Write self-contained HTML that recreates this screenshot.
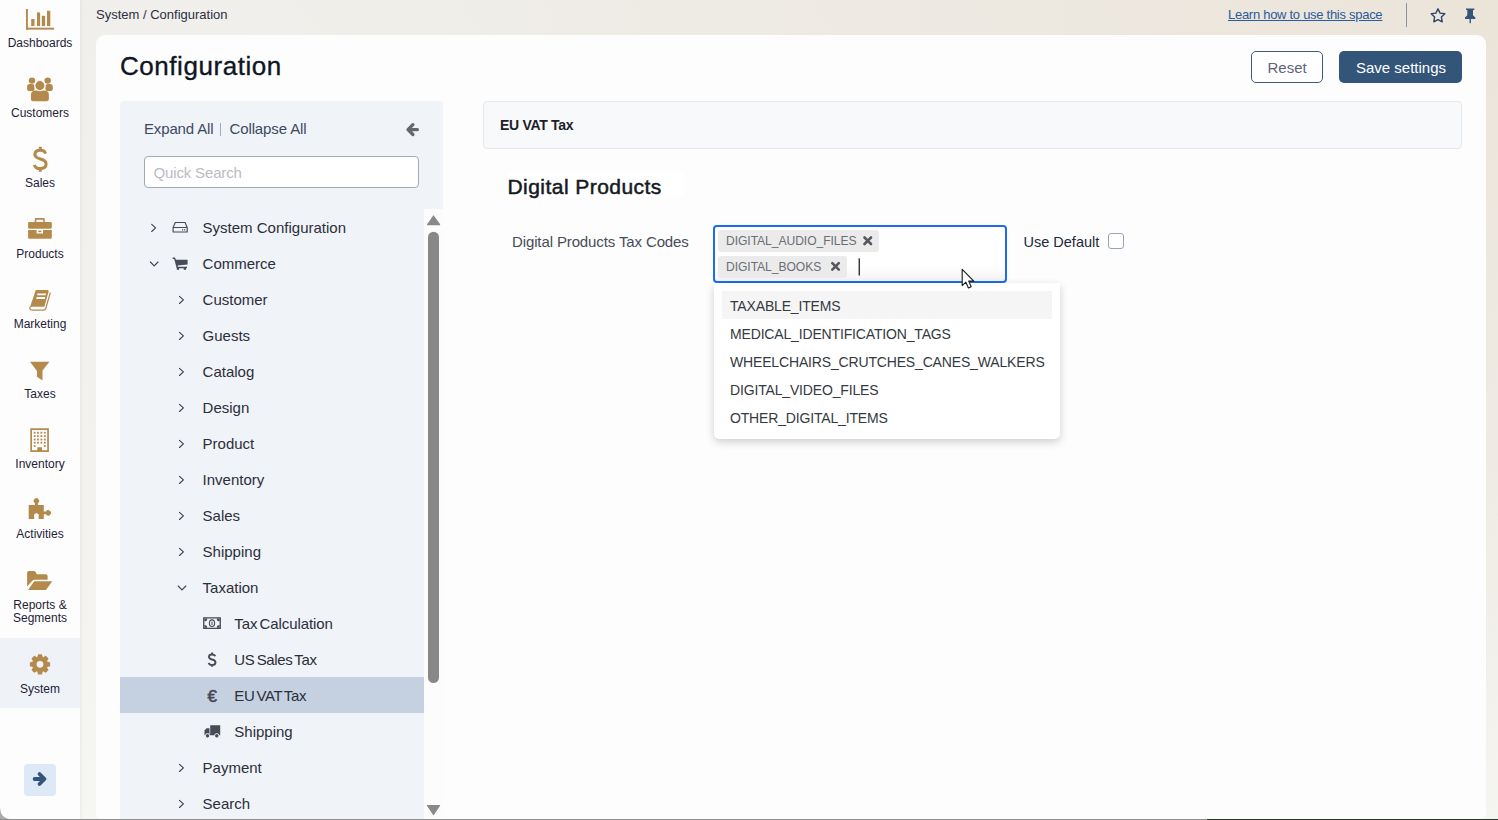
<!DOCTYPE html>
<html><head><meta charset="utf-8">
<style>
*{margin:0;padding:0;box-sizing:border-box}
html,body{width:1498px;height:820px;overflow:hidden}
body{font-family:"Liberation Sans",sans-serif;background:#fdfdfd;position:relative;color:#2a2e38}
.abs{position:absolute}
.t{position:absolute;white-space:nowrap;line-height:1}
#bg{left:80px;top:0;width:1418px;height:820px;background:radial-gradient(ellipse 1250px 850px at 100% 0%,#ebe4d9 0%,rgba(236,230,221,.75) 40%,rgba(238,236,231,0) 100%),linear-gradient(180deg,#f0efeb 0%,#f3f2ee 60%,#f6f6f2 100%)}
#side{left:0;top:0;width:80px;height:820px;background:#fdfdfd;box-shadow:1px 0 3px rgba(0,0,0,.06)}
.nav .lbl{position:absolute;left:0;width:80px;text-align:center;font-size:12px;color:#1d2238;line-height:13px}
.nav svg{position:absolute}
#card{left:96px;top:35px;width:1390px;height:784px;background:#fdfdfd;border-radius:9px 9px 5px 5px}
#tree{left:120px;top:101px;width:323px;height:720px;background:#f0f3f8;border-radius:4px 4px 0 0}
.ti{position:absolute;font-size:15px;color:#2b2f3a;white-space:nowrap;line-height:1}
.chev{position:absolute}
</style></head><body>
<div id="bg" class="abs"></div>
<div id="side" class="abs nav">
<div class="abs" style="left:0;top:638px;width:80px;height:70px;background:#eff3f8"></div>
<svg class="abs" style="left:0;top:0" width="80" height="820" viewBox="0 0 80 820">
<g fill="#b38a4c">
<!-- dashboards -->
<rect x="26" y="9" width="1.9" height="20.6"/>
<rect x="26" y="27.7" width="28" height="1.9"/>
<rect x="31.2" y="19" width="3.3" height="7.1"/>
<rect x="37" y="12.4" width="3.1" height="13.7"/>
<rect x="41.8" y="15.8" width="3.3" height="10.3"/>
<rect x="47" y="10.8" width="3.3" height="15.3"/>
<!-- customers -->
<circle cx="32" cy="80.6" r="3.2"/>
<circle cx="47.7" cy="80.6" r="3.2"/>
<rect x="27.1" y="84" width="7.4" height="7" rx="2.6"/>
<rect x="45.4" y="84" width="7.4" height="7" rx="2.6"/>
<path d="M30.9,99V95Q30.9,90.4 35.5,90.4H44.3Q48.9,90.4 48.9,95V99Q48.9,101.2 46.7,101.2H33.1Q30.9,101.2 30.9,99Z"/>
<circle cx="39.9" cy="85.6" r="5.1" stroke="#fdfdfd" stroke-width="1.1"/>
<!-- products briefcase -->
<path d="M34.7,222V219.2Q34.7,218.1 35.8,218.1H43.7Q44.8,218.1 44.8,219.2V222H43.2V219.8H36.3V222Z"/>
<rect x="28.1" y="222" width="23.7" height="6.7" rx="1.3"/>
<path d="M28.1,230H36.6V233.5H43V230H51.8V237.4Q51.8,238.7 50.5,238.7H29.4Q28.1,238.7 28.1,237.4Z"/>
<rect x="38.3" y="230.6" width="3" height="1.6"/>
<!-- marketing book -->
<path d="M35.8,290.1H47.6Q48.9,290.1 48.6,291.4L44.4,306.8H30.1Z M37.5,293.5L37.1,295.2H45.7L46.1,293.5Z M36.7,296.9L36.2,299H44.8L45.3,296.9Z" fill-rule="evenodd"/>
<path d="M31.3,306.8Q29.9,307.6 30.6,308.7Q31.4,309.6 32.6,309.6H43.2Q44.8,309.6 45.2,308.2L49.8,292.2L50.9,292.7L46.2,309.3Q45.6,310.7 43.8,310.7H32.1Q29.6,310.7 29.1,308.6Q28.8,306.5 31.2,305.9Z"/>
<!-- taxes filter -->
<path d="M30,361.7H49.4L42.5,370.5V380.6L37,376.7V370.9Z"/>
<!-- inventory building -->
<path d="M30.3,428.2H48.9V451.9H30.3Z M32,430V450.2H37.3V447.2H42V450.2H47.2V430Z" fill-rule="evenodd"/>
</g>
<g fill="#b38a4c">
<rect x="33.8" y="431.8" width="1.8" height="1.8"/><rect x="37.0" y="431.8" width="1.8" height="1.8"/><rect x="40.5" y="431.8" width="1.8" height="1.8"/><rect x="43.9" y="431.8" width="1.8" height="1.8"/><rect x="33.8" y="435.2" width="1.8" height="1.8"/><rect x="37.0" y="435.2" width="1.8" height="1.8"/><rect x="40.5" y="435.2" width="1.8" height="1.8"/><rect x="43.9" y="435.2" width="1.8" height="1.8"/><rect x="33.8" y="438.6" width="1.8" height="1.8"/><rect x="37.0" y="438.6" width="1.8" height="1.8"/><rect x="40.5" y="438.6" width="1.8" height="1.8"/><rect x="43.9" y="438.6" width="1.8" height="1.8"/><rect x="33.8" y="441.8" width="1.8" height="1.8"/><rect x="37.0" y="441.8" width="1.8" height="1.8"/><rect x="40.5" y="441.8" width="1.8" height="1.8"/><rect x="43.9" y="441.8" width="1.8" height="1.8"/><rect x="33.8" y="445.2" width="1.8" height="1.8"/><rect x="43.9" y="445.2" width="1.8" height="1.8"/>
</g>
<g fill="#b38a4c">
<!-- activities puzzle -->
<path d="M28.7,505.1H34.9V503.2A2.7,2.7 0 1 1 37.9,503.2V505.1H43.8V511.4H45.9A2.7,2.7 0 1 1 45.9,514.3H43.8V518.9H38.6V516.6A2.4,2.4 0 1 0 34.2,516.6V518.9H28.7Z"/>
<!-- reports folder -->
<path d="M27.1,586.5V572.8Q27.1,571 28.9,571H33.9Q35.3,571 36,572.6L36.6,574.3H45.8Q47.6,574.3 47.6,576.1V579.7H34.6Q33,579.7 32.1,581Z"/>
<path d="M34.2,581.2H52.3L45.9,589.9H28.1Z"/>
<!-- system gear -->
<path fill-rule="evenodd" d="M37.23,657.22L38.10,654.18L41.90,654.18L42.77,657.22L43.05,657.34L45.81,655.80L48.50,658.49L46.96,661.25L47.08,661.53L50.12,662.40L50.12,666.20L47.08,667.07L46.96,667.35L48.50,670.11L45.81,672.80L43.05,671.26L42.77,671.38L41.90,674.42L38.10,674.42L37.23,671.38L36.95,671.26L34.19,672.80L31.50,670.11L33.04,667.35L32.92,667.07L29.88,666.20L29.88,662.40L32.92,661.53L33.04,661.25L31.50,658.49L34.19,655.80L36.95,657.34Z M43.4,664.3A3.4,3.4 0 1 0 36.6,664.3A3.4,3.4 0 1 0 43.4,664.3Z"/>
</g>
</svg>
<div class="lbl" style="top:37.4px">Dashboards</div>
<div class="lbl" style="top:107.2px">Customers</div>
<div class="lbl" style="top:177.2px">Sales</div>
<div class="lbl" style="top:248.4px">Products</div>
<div class="lbl" style="top:318.2px">Marketing</div>
<div class="lbl" style="top:388.4px">Taxes</div>
<div class="lbl" style="top:458.0px">Inventory</div>
<div class="lbl" style="top:528.4px">Activities</div>
<div class="lbl" style="top:599.1px">Reports &amp;</div>
<div class="lbl" style="top:612.4px">Segments</div>
<div class="lbl" style="top:683.0px">System</div>
<svg class="abs" style="left:0;top:0" width="80" height="200"><path d="M45.6,153.6C45,151.4 43.2,150.3 40.2,150.3C36.6,150.3 34.9,152.2 34.9,154.5C34.9,157 37,158 40.5,159C44.5,160 46.1,161.5 46.1,164.1C46.1,166.8 43.9,168.6 40.2,168.6C37.1,168.6 35,167.2 34.4,164.8M40.3,146.8V150.5M40.3,168.5V171.7" fill="none" stroke="#b38a4c" stroke-width="3"/></svg>
<div class="abs" style="left:24px;top:764px;width:32px;height:32px;background:#dde9f7;border-radius:4px"></div>
<svg class="abs" style="left:0;top:0" width="80" height="820"><path d="M34.6,779H43.5M39.5,774L44.5,779L39.5,784" fill="none" stroke="#34557a" stroke-width="3.8" stroke-linecap="round" stroke-linejoin="round"/></svg>
</div>
<div class="t" style="left:96px;top:8.2px;font-size:13px;color:#2c2e42">System / Configuration</div>
<div class="t" style="left:1228px;top:8px;font-size:13px;letter-spacing:-.28px;color:#2a5b9c;text-decoration:underline">Learn how to use this space</div>
<div class="abs" style="left:1406px;top:3px;width:1px;height:24px;background:#8a919c"></div>
<svg class="abs" style="left:1420px;top:0" width="78" height="34" viewBox="1420 0 78 34">
<path d="M1438,8.8L1440.1,13.1L1444.8,13.8L1441.4,17.1L1442.2,21.8L1438,19.6L1433.8,21.8L1434.6,17.1L1431.2,13.8L1435.9,13.1Z" fill="none" stroke="#2d4566" stroke-width="1.4" stroke-linejoin="round"/>
<path d="M1466,8.5H1474.3V10H1473V15.2L1475.3,17.5V19H1470.9V22.7L1470.2,23.5L1469.5,22.7V19H1465V17.5L1467.3,15.2V10H1466Z" fill="#34557a"/>
</svg>
<div id="card" class="abs"></div>
<div class="t" style="left:120px;top:52.7px;font-size:26px;letter-spacing:.55px;color:#0f1522;-webkit-text-stroke:.35px #0f1522">Configuration</div>
<div class="abs" style="left:1251px;top:51px;width:72px;height:32px;border:1px solid #3d5b80;border-radius:5px;background:#fff"></div>
<div class="t" style="left:1267.5px;top:59.5px;font-size:15px;color:#5c6577">Reset</div>
<div class="abs" style="left:1339px;top:51px;width:123px;height:32px;background:#34557a;border-radius:5px"></div>
<div class="t" style="left:1356px;top:59.5px;font-size:15px;color:#fff">Save settings</div>
<div id="tree" class="abs"></div>
<div class="t" style="left:144px;top:121.3px;font-size:15px;letter-spacing:-.15px;color:#3b4a63">Expand All</div>
<div class="abs" style="left:220px;top:123px;width:1px;height:13px;background:#a3abb8"></div>
<div class="t" style="left:229.5px;top:121.3px;font-size:15px;letter-spacing:-.12px;color:#3b4a63">Collapse All</div>
<svg class="abs" style="left:398px;top:115px" width="30" height="30" viewBox="398 115 30 30"><path d="M417.4,129.6H410M412.9,124.7L408,129.6L412.9,134.5" fill="none" stroke="#65676c" stroke-width="3.3" stroke-linecap="round" stroke-linejoin="round"/></svg>
<div class="abs" style="left:144px;top:156px;width:275px;height:32px;background:#fff;border:1px solid #a4abb8;border-radius:4px"></div>
<div class="t" style="left:153.5px;top:165px;font-size:15px;letter-spacing:-.15px;color:#b9bcc2">Quick Search</div>
<div class="abs" style="left:424px;top:209px;width:19px;height:611px;background:#fcfcfc"></div>
<svg class="abs" style="left:424px;top:209px" width="19" height="611" viewBox="0 0 19 611">
<path d="M3.6,15.7L9.5,7L15.6,15.7Z" fill="#898989" stroke="#898989" stroke-width="1.2" stroke-linejoin="round"/>
<rect x="4" y="22.7" width="11" height="451.3" rx="5.5" fill="#888"/>
<path d="M3.4,596.5L9.5,605.5L15.6,596.5Z" fill="#898989" stroke="#898989" stroke-width="1.2" stroke-linejoin="round"/>
</svg>

<div class="abs" style="left:120px;top:677px;width:304px;height:36px;background:#c5d1e0"></div>
<div class="ti" style="left:202.6px;top:220.1px">System Configuration</div>
<div class="ti" style="left:202.6px;top:256.1px">Commerce</div>
<div class="ti" style="left:202.6px;top:292.1px">Customer</div>
<div class="ti" style="left:202.6px;top:328.1px">Guests</div>
<div class="ti" style="left:202.6px;top:364.1px">Catalog</div>
<div class="ti" style="left:202.6px;top:400.1px">Design</div>
<div class="ti" style="left:202.6px;top:436.1px">Product</div>
<div class="ti" style="left:202.6px;top:472.1px">Inventory</div>
<div class="ti" style="left:202.6px;top:508.1px">Sales</div>
<div class="ti" style="left:202.6px;top:544.1px">Shipping</div>
<div class="ti" style="left:202.6px;top:580.1px">Taxation</div>
<div class="ti" style="left:234.3px;top:616.1px;word-spacing:-2px;letter-spacing:-.08px">Tax Calculation</div>
<div class="ti" style="left:234.3px;top:652.1px;word-spacing:-1.6px;letter-spacing:-.35px">US Sales Tax</div>
<div class="ti" style="left:234.3px;top:688.1px;word-spacing:-1.6px;letter-spacing:-.4px">EU VAT Tax</div>
<div class="ti" style="left:234.3px;top:724.1px">Shipping</div>
<div class="ti" style="left:202.6px;top:760.1px">Payment</div>
<div class="ti" style="left:202.6px;top:796.1px">Search</div>
<svg class="abs" style="left:0;top:0" width="460" height="820" viewBox="0 0 460 820"><g fill="none" stroke="#3c4350" stroke-width="1.15" stroke-linecap="round" stroke-linejoin="round">
<path d="M151.7,224.3L155.6,227.9L151.7,231.5"/>
<path d="M150.4,262.0L154.2,265.8L158.0,262.0"/>
<path d="M179.5,296.3L183.4,299.9L179.5,303.5"/>
<path d="M179.5,332.3L183.4,335.9L179.5,339.5"/>
<path d="M179.5,368.3L183.4,371.9L179.5,375.5"/>
<path d="M179.5,404.3L183.4,407.9L179.5,411.5"/>
<path d="M179.5,440.3L183.4,443.9L179.5,447.5"/>
<path d="M179.5,476.3L183.4,479.9L179.5,483.5"/>
<path d="M179.5,512.3L183.4,515.9L179.5,519.5"/>
<path d="M179.5,548.3L183.4,551.9L179.5,555.5"/>
<path d="M178.2,586.0L182.0,589.8L185.8,586.0"/>
<path d="M179.5,764.3L183.4,767.9L179.5,771.5"/>
<path d="M179.5,800.3L183.4,803.9L179.5,807.5"/></g>
<g fill="none" stroke="#464b55" stroke-width="1.15">
<path d="M175.3,222.5H185.1L187.2,227.5V232H173.1V227.5Z M173.1,227.5H187.2" stroke-linejoin="round"/>
</g>
<g fill="#464b55">
<rect x="182" y="229.2" width="1.2" height="1.2"/><rect x="184" y="229.2" width="1.2" height="1.2"/>
<path d="M172.7,257.6H175L175.9,259.7H187.6V264.4L177.6,265.6L177.9,266.8H187V268.2H176.7L174.2,258.9H172.7Z"/>
<rect x="176.8" y="267.5" width="2.3" height="2.3"/><rect x="183.7" y="267.5" width="2.3" height="2.3"/>
<!-- money -->
<path fill-rule="evenodd" d="M203.1,617.3H220.9V628.9H203.1Z M204.4,618.4V627.8H219.6V618.4Z"/>
<path d="M204.4,618.4H207.3A2.9,2.9 0 0 1 204.4,621.3Z M219.6,618.4H216.7A2.9,2.9 0 0 0 219.6,621.3Z M204.4,627.8H207.3A2.9,2.9 0 0 0 204.4,624.9Z M219.6,627.8H216.7A2.9,2.9 0 0 1 219.6,624.9Z"/>
<ellipse cx="212" cy="623.2" rx="2.6" ry="3.3" fill="none" stroke="#464b55" stroke-width="1.1"/>
<rect x="211.5" y="621.6" width="1" height="3.4"/>
</g>
<!-- truck -->
<g fill="#464b55">
<path d="M210.2,725.2H220.2V735.3H208.5V734.2H210.2Z"/>
<path d="M204.5,730.5L206.5,728.2H209.5V735.3H204.5Z"/>
<circle cx="207.5" cy="735.8" r="2.2" stroke="#f0f3f8" stroke-width="1"/>
<circle cx="216.8" cy="735.8" r="2.2" stroke="#f0f3f8" stroke-width="1"/>
</g>
</svg>
<svg class="abs" style="left:0;top:0" width="300" height="820"><path transform="translate(212.1 659.65) scale(0.58) translate(-40.3 -159.25)" d="M45.6,153.6C45,151.4 43.2,150.3 40.2,150.3C36.6,150.3 34.9,152.2 34.9,154.5C34.9,157 37,158 40.5,159C44.5,160 46.1,161.5 46.1,164.1C46.1,166.8 43.9,168.6 40.2,168.6C37.1,168.6 35,167.2 34.4,164.8M40.3,146.8V150.5M40.3,168.5V171.7" fill="none" stroke="#464b55" stroke-width="3.3"/></svg>
<div class="t" style="left:207.4px;top:687.8px;font-size:17px;color:#464b55;-webkit-text-stroke:.6px #464b55">&#8364;</div>
<div class="abs" style="left:483px;top:101px;width:979px;height:48px;background:#f8f9fa;border:1px solid #e4e7eb;border-radius:4px"></div>
<div class="t" style="left:500px;top:117.5px;font-size:14px;letter-spacing:-.3px;font-weight:bold;color:#1b1f28">EU VAT Tax</div>
<div class="abs" style="left:507px;top:173px;width:176px;height:24px;background:#fff"></div>
<div class="t" style="left:507.5px;top:175.7px;font-size:21px;letter-spacing:.45px;color:#151a24;-webkit-text-stroke:.5px #151a24">Digital Products</div>
<div class="t" style="left:512px;top:233.8px;font-size:15px;letter-spacing:-.12px;color:#474c58">Digital Products Tax Codes</div>
<div class="abs" style="left:713px;top:225px;width:294px;height:58px;border:2px solid #1b6cf0;border-radius:4px;background:linear-gradient(180deg,#fff 0%,#fff 72%,#f3f3f3 100%)"></div>
<div class="abs" style="left:718px;top:230px;width:161px;height:22px;background:#ebebeb;border-radius:3px"></div>
<div class="t" style="left:726px;top:235px;font-size:12.1px;letter-spacing:-.05px;color:#6b6e74">DIGITAL_AUDIO_FILES</div>
<div class="abs" style="left:718px;top:256px;width:129px;height:22px;background:#ebebeb;border-radius:3px"></div>
<div class="t" style="left:726px;top:260.5px;font-size:12.1px;letter-spacing:-.05px;color:#6b6e74">DIGITAL_BOOKS</div>
<svg class="abs" style="left:0;top:0" width="1100" height="450" viewBox="0 0 1100 450">
<g stroke="#55585e" stroke-width="2.6" stroke-linecap="round">
<path d="M864.5,237.5L871,244M871,237.5L864.5,244"/>
<path d="M832.3,263.2L838.8,269.7M838.8,263.2L832.3,269.7"/>
</g>
<rect x="858.6" y="258.3" width="1.3" height="17.2" fill="#222"/>
</svg>
<div class="t" style="left:1023.5px;top:235.2px;font-size:14.5px;color:#22283a">Use Default</div>
<div class="abs" style="left:1108px;top:233px;width:16px;height:16px;border:1px solid #9aa2b6;border-radius:3px;background:#fff"></div>
<div class="abs" style="left:714px;top:283px;width:346px;height:156px;background:#fff;border-radius:0 0 5px 5px;box-shadow:0 3px 9px rgba(0,0,0,.19)"></div>
<div class="abs" style="left:722px;top:291px;width:330px;height:28px;background:#f5f5f5"></div>
<div class="t" style="left:730px;top:298.7px;font-size:14px;letter-spacing:-.16px;color:#353942">TAXABLE_ITEMS</div>
<div class="t" style="left:730px;top:326.7px;font-size:14px;letter-spacing:-.16px;color:#353942">MEDICAL_IDENTIFICATION_TAGS</div>
<div class="t" style="left:730px;top:354.7px;font-size:14px;letter-spacing:-.16px;color:#353942">WHEELCHAIRS_CRUTCHES_CANES_WALKERS</div>
<div class="t" style="left:730px;top:382.7px;font-size:14px;letter-spacing:-.16px;color:#353942">DIGITAL_VIDEO_FILES</div>
<div class="t" style="left:730px;top:410.7px;font-size:14px;letter-spacing:-.16px;color:#353942">OTHER_DIGITAL_ITEMS</div>
<svg class="abs" style="left:955px;top:262px" width="24" height="30" viewBox="0 0 24 30">
<path d="M7.2,7.3V23.6L10.9,20.2L13.4,26L16.2,24.8L13.7,19.1H18.8Z" fill="#fff" stroke="#1a1a1a" stroke-width="1.1" stroke-linejoin="round"/>
</svg>
<svg class="abs" style="left:0;top:800px" width="20" height="20" viewBox="0 800 20 20"><path d="M0,808Q0.5,818.5 11,819.5V820H0Z" fill="#a9a9a9"/></svg>
<div class="abs" style="left:0;top:819px;width:1207px;height:1px;background:#8f8f8f"></div>
<div class="abs" style="left:1207px;top:819px;width:291px;height:1px;background:#2c3a2a"></div>
</body></html>
